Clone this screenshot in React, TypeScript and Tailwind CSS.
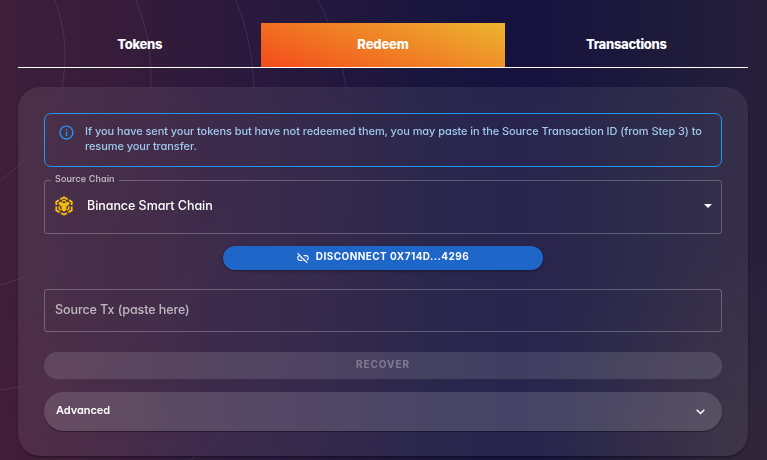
import React from "react";

const tabs = [
  { label: "Tokens", active: false },
  { label: "Redeem", active: true },
  { label: "Transactions", active: false },
];

function Rings() {
  return (
    <svg className="absolute inset-0 h-full w-full" viewBox="0 0 767 460" fill="none" stroke="#fff" strokeOpacity="0.09">
      <path d="M55 0C62 21 65 38 65 53C65 100 52 141 0 181" />
      <path d="M136 0C147 27 151 54 151 78C151 170 101 259 0 285" />
      <path d="M236 0C249 33 254 65 254 96C254 240 160 369 0 390" />
      <path d="M318 0C338 40 348 83 348 115C348 270 284 400 190 460" />
    </svg>
  );
}

function InfoIcon() {
  return (
    <svg className="h-[17px] w-[17px] shrink-0" viewBox="0 0 24 24" fill="#2196f3">
      <path d="M11 7h2v2h-2zm0 4h2v6h-2zm1-9C6.48 2 2 6.48 2 12s4.48 10 10 10 10-4.48 10-10S17.52 2 12 2zm0 18c-4.41 0-8-3.59-8-8s3.59-8 8-8 8 3.59 8 8-3.59 8-8 8z" />
    </svg>
  );
}

function ChainIcon() {
  return (
    <svg className="h-[20px] w-[18px] shrink-0" viewBox="0 0 18 20" fill="none" stroke="#f0b90b" strokeWidth="1.9">
      <path d="M5.2 3.4 9 1.3l3.8 2.1" />
      <path d="M4 4.1 1.3 5.7v3.4M14 4.1l2.7 1.6v3.4" />
      <path d="M1.3 10.4v4l3.4 2M16.7 10.4v4l-3.4 2" />
      <path d="M6 17 9 18.7l3-1.7" />
      <path d="m6.9 5.4 2.1-1 2.1 1" strokeWidth="1.5" />
      <path d="M4.2 10v2.9l1.6 1.2M13.8 10v2.9l-1.6 1.2" strokeWidth="1.5" />
      <path d="m3.6 6.4 2.2-.9L9 7.3l3.2-1.8 2.2.9v2.2l-2.8 1.7v3.8L9 15.7l-2.6-1.6v-3.8L3.6 8.6z" fill="#f0b90b" stroke="none" />
    </svg>
  );
}

function LinkOffIcon() {
  return (
    <svg className="h-[14px] w-[14px] shrink-0" viewBox="0 0 24 24" fill="#fff">
      <path d="M17 7h-4v1.9h4c1.71 0 3.1 1.39 3.1 3.1 0 1.43-.98 2.63-2.31 2.98l1.46 1.46C20.88 15.61 22 13.95 22 12c0-2.76-2.24-5-5-5zm-1 4h-2.19l2 2H16zM2 4.27l3.11 3.11C3.29 8.12 2 9.91 2 12c0 2.76 2.24 5 5 5h4v-1.9H7c-1.71 0-3.1-1.39-3.1-3.1 0-1.59 1.21-2.9 2.76-3.07L8.73 11H8v2h2.73L13 15.27V17h1.73l4.01 4L20 19.74 3.27 3 2 4.27z" />
    </svg>
  );
}

export default function App() {
  return (
    <div className="relative h-[460px] w-[767px] overflow-hidden bg-[radial-gradient(circle_at_0%_100%,rgba(90,20,45,0.2),transparent_180px),radial-gradient(circle_at_100%_100%,rgba(70,55,50,0.3),transparent_230px),linear-gradient(90deg,#3d1f39_0px,#351c3a_130px,#28193d_270px,#1c163d_400px,#16123e_510px,#17133e_550px,#1e1a3b_660px,#26203a_767px)] font-['Inter',sans-serif] text-white">
      <Rings />
      <div className="relative px-[18px] pr-[19px] pt-[23px]">
        <nav className="grid h-[45px] grid-cols-3 border-b border-white">
          {tabs.map((tab) => (
            <button
              key={tab.label}
              className={
                tab.active
                  ? "bg-[linear-gradient(20deg,#f44b1b,#ecb52f)] text-[13px] font-extrabold tracking-[-0.15px]"
                  : "text-[13px] font-extrabold tracking-[-0.3px]"
              }
            >
              {tab.label}
            </button>
          ))}
        </nav>

        <main className="mt-[19px] h-[369px] rounded-[22px] bg-white/[0.08] px-[26px] pt-[26px] shadow-[0_1px_2px_rgba(0,0,0,0.4)] backdrop-blur-[10px] [font-feature-settings:'cv11']">
          <div className="flex h-[54px] rounded-[7px] border border-[#2196f3] pl-[13px] pt-[10px] text-[11px] leading-[15px] tracking-[-0.07px] text-[#a0c9ee]">
            <InfoIcon />
            <p className="-mt-px ml-[10px] whitespace-nowrap pt-px font-medium">
              If you have sent your tokens but have not redeemed them, you may paste in the Source Transaction ID (from Step 3) to
              <br />
              resume your transfer.
            </p>
          </div>

          <fieldset className="mt-[8px] h-[59px] rounded-[3px] border border-white/25 pl-[6px]">
            <legend className="h-[10px] px-1 text-[9px] font-medium leading-[8px] tracking-[0.12px] text-white/70">Source Chain</legend>
            <div className="flex h-[42px] items-center pl-[4px] pr-[9px]">
              <ChainIcon />
              <span className="ml-[14px] flex-1 text-[12.5px] font-medium tracking-[-0.05px]">Binance Smart Chain</span>
              <svg className="h-1 w-2" viewBox="0 0 8 4" fill="#fff">
                <path d="M0 0h8L4 4z" />
              </svg>
            </div>
          </fieldset>

          <button className="mx-auto mt-3 flex h-6 w-[320px] items-center justify-center gap-[6px] rounded-full bg-[#1e66c8] pr-px text-[10px] font-bold tracking-[0.43px] shadow-[0_1px_3px_rgba(0,0,0,0.4)]">
            <LinkOffIcon />
            <span className="-mt-[3px]">DISCONNECT 0X714D...4296</span>
          </button>

          <div className="mt-[19px] flex h-[43px] items-center rounded-[3px] border border-white/25 pl-[10px] text-[12.5px] font-medium tracking-[-0.08px] text-white/65">
            Source Tx (paste here)
          </div>

          <button className="mt-5 flex h-[27px] w-full items-center justify-center rounded-full bg-white/[0.12] pb-[2px] text-[10px] font-bold tracking-[0.9px] text-white/30">
            RECOVER
          </button>

          <button className="mt-[13px] flex h-[39px] w-full items-center justify-between rounded-full bg-white/[0.14] pl-3 pr-[17px] text-[11px] font-semibold tracking-[-0.05px] shadow-[0_1px_1px_rgba(0,0,0,0.4)]">
            <span className="-mt-[2px]">Advanced</span>
            <svg className="h-[6px] w-[9px]" viewBox="0 0 9 6" fill="none" stroke="#fff" strokeWidth="1.5">
              <path d="m.7.7 3.8 3.8L8.3.7" />
            </svg>
          </button>
        </main>
      </div>
    </div>
  );
}
